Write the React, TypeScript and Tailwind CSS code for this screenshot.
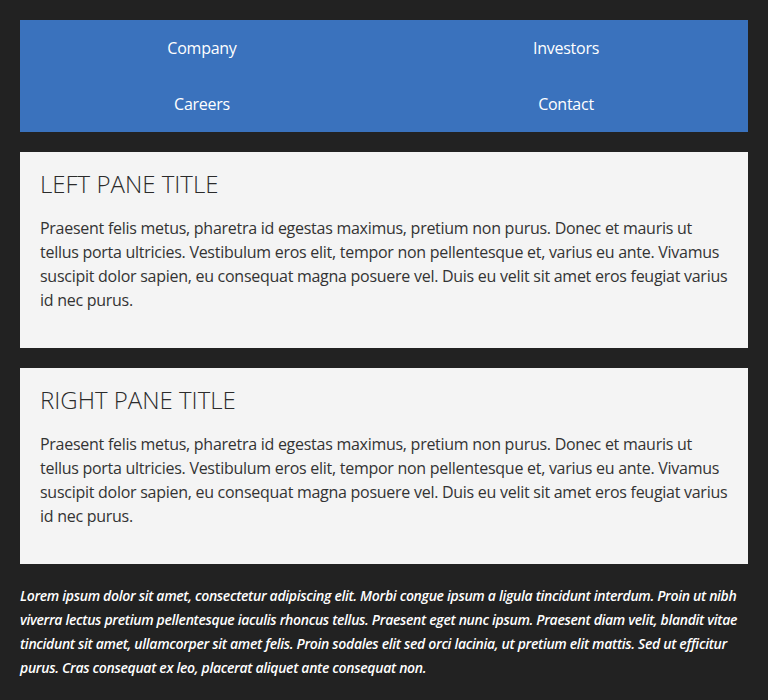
const links = ["Company", "Investors", "Careers", "Contact"];

const body =
  "Praesent felis metus, pharetra id egestas maximus, pretium non purus. Donec et mauris ut tellus porta ultricies. Vestibulum eros elit, tempor non pellentesque et, varius eu ante. Vivamus suscipit dolor sapien, eu consequat magna posuere vel. Duis eu velit sit amet eros feugiat varius id nec purus.";

function Pane({ title }: { title: string }) {
  return (
    <section className="bg-[#f4f4f4] px-5 pt-4 pb-5 text-[#333]">
      <h2 className="text-[24px] leading-8 font-light text-[#2b2b2b]">{title}</h2>
      <p className="mt-4 mb-4 text-[16px] leading-6 tracking-[-0.27px]">{body}</p>
    </section>
  );
}

export default function App() {
  return (
    <div
      className="min-h-[700px] bg-[#222] p-5"
      style={{ fontFamily: '"Open Sans", "Liberation Sans", sans-serif' }}
    >
      <nav className="grid grid-cols-2 bg-[#3a72bd] text-white">
        {links.map((l) => (
          <a
            key={l}
            href="#"
            className="flex h-14 items-center justify-center text-[16px] tracking-[-0.25px]"
          >
            {l}
          </a>
        ))}
      </nav>
      <div className="mt-5 flex flex-col gap-5">
        <Pane title="LEFT PANE TITLE" />
        <Pane title="RIGHT PANE TITLE" />
      </div>
      <p className="mt-5 text-[14px] leading-6 font-semibold italic tracking-[-0.32px] text-white">
        Lorem ipsum dolor sit amet, consectetur adipiscing elit. Morbi congue ipsum a ligula tincidunt
        interdum. Proin ut nibh viverra lectus pretium pellentesque iaculis rhoncus tellus. Praesent eget
        nunc ipsum. Praesent diam velit, blandit vitae tincidunt sit amet, ullamcorper sit amet felis.
        Proin sodales elit sed orci lacinia, ut pretium elit mattis. Sed ut efficitur purus. Cras
        consequat ex leo, placerat aliquet ante consequat non.
      </p>
    </div>
  );
}
